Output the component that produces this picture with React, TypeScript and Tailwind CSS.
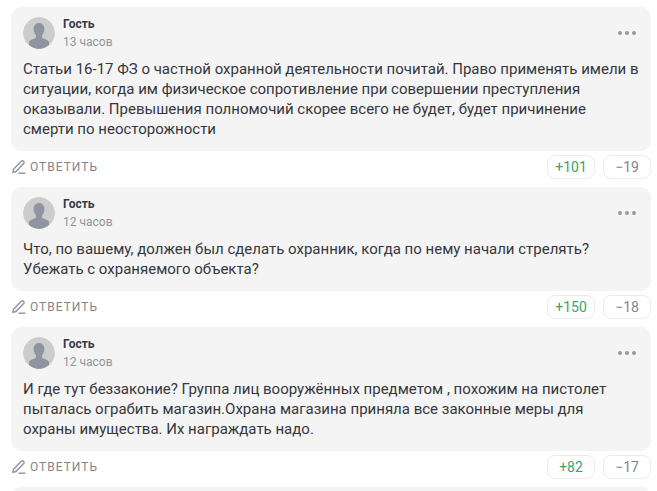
const comments = [
  { time: "13 часов", lines: ["Статьи 16-17 ФЗ о частной охранной деятельности почитай. Право применять имели в", "ситуации, когда им физическое сопротивление при совершении преступления", "оказывали. Превышения полномочий скорее всего не будет, будет причинение", "смерти по неосторожности"], up: "+101", down: "−19" },
  { time: "12 часов", lines: ["Что, по вашему, должен был сделать охранник, когда по нему начали стрелять?", "Убежать с охраняемого объекта?"], up: "+150", down: "−18" },
  { time: "12 часов", lines: ["И где тут беззаконие? Группа лиц вооружённых предметом , похожим на пистолет", "пыталась ограбить магазин.Охрана магазина приняла все законные меры для", "охраны имущества. Их награждать надо."], up: "+82", down: "−17" },
];

function Avatar() {
  return (
    <svg width="32" height="32" viewBox="0 0 32 32" className="shrink-0 rounded-full">
      <circle cx="16" cy="16" r="16" fill="#cccccc" />
      <path d="M16 6c-3.400 0-5.400 2.700-5.400 6.100 0 2.600 1 4.900 2.400 6.300v2.200c-.8 1.200-5.600 2.200-7 4.200V28c2.800 2.500 6.600 4 10 4s7.200-1.500 10-4v-3.200c-1.400-2-6.200-3-7-4.200v-2.200c1.400-1.400 2.400-3.700 2.400-6.300C21.400 8.700 19.400 6 16 6z" fill="#8e95a0" />
    </svg>
  );
}

function Pencil() {
  return (
    <svg width="14" height="14" viewBox="0 0 14 14" fill="none" stroke="#8f949e" strokeWidth="1.4" className="shrink-0">
      <path d="M1.500 9.200 9.300 1.200a1.400 1.400 0 0 1 2 0l.4.4a1.400 1.400 0 0 1 0 2L3.900 11.500l-2.900.7z" />
      <path d="M6.500 13.200h7" />
    </svg>
  );
}

export default function App() {
  return (
    <div className="h-[491px] w-[657px] overflow-hidden bg-white pt-[7px] pl-[11px] pr-[6px] font-['Roboto',sans-serif]">
      {comments.map((c, i) => (
        <div key={i}>
          <div className="rounded-[11px] bg-[#f4f4f4] pt-[10px] pb-[12px] pl-[12px] pr-[15px]">
            <div className="flex items-center justify-between h-[32px]">
              <div className="flex items-center gap-[8px]">
                <Avatar />
                <div className="flex flex-col">
                  <span className="text-[12px] leading-[14px] font-bold text-[#333a45]">Гость</span>
                  <span className="text-[12px] leading-[14px] text-[#8e95a0] mt-[4px]">{c.time}</span>
                </div>
              </div>
              <div className="flex gap-[3px]">
                <span className="h-[4px] w-[4px] rounded-full bg-[#98989c]" />
                <span className="h-[4px] w-[4px] rounded-full bg-[#98989c]" />
                <span className="h-[4px] w-[4px] rounded-full bg-[#98989c]" />
              </div>
            </div>
            <div className="mt-[10px] text-[15px] leading-[20px] text-[#35373c]">
              {c.lines.map((l, j) => (
                <div key={j} className="whitespace-nowrap">{l}</div>
              ))}
            </div>
          </div>
          <div className="flex h-[36px] items-center justify-between pb-[4px]">
            <div className="flex items-center gap-[4px] pl-[1px] text-[12px] tracking-[1px] text-[#80858f]">
              <Pencil />
              <span>ОТВЕТИТЬ</span>
            </div>
            <div className="flex gap-[8px]">
              <span className="flex h-[24px] w-[48px] items-center justify-center rounded-[8px] border border-[#ececec] text-[14px] text-[#3aa36d]">{c.up}</span>
              <span className="flex h-[24px] w-[48px] items-center justify-center rounded-[8px] border border-[#ececec] text-[14px] text-[#80858f]">{c.down}</span>
            </div>
          </div>
        </div>
      ))}
      <div className="h-[20px] rounded-t-[11px] bg-[#f4f4f4]" />
    </div>
  );
}
